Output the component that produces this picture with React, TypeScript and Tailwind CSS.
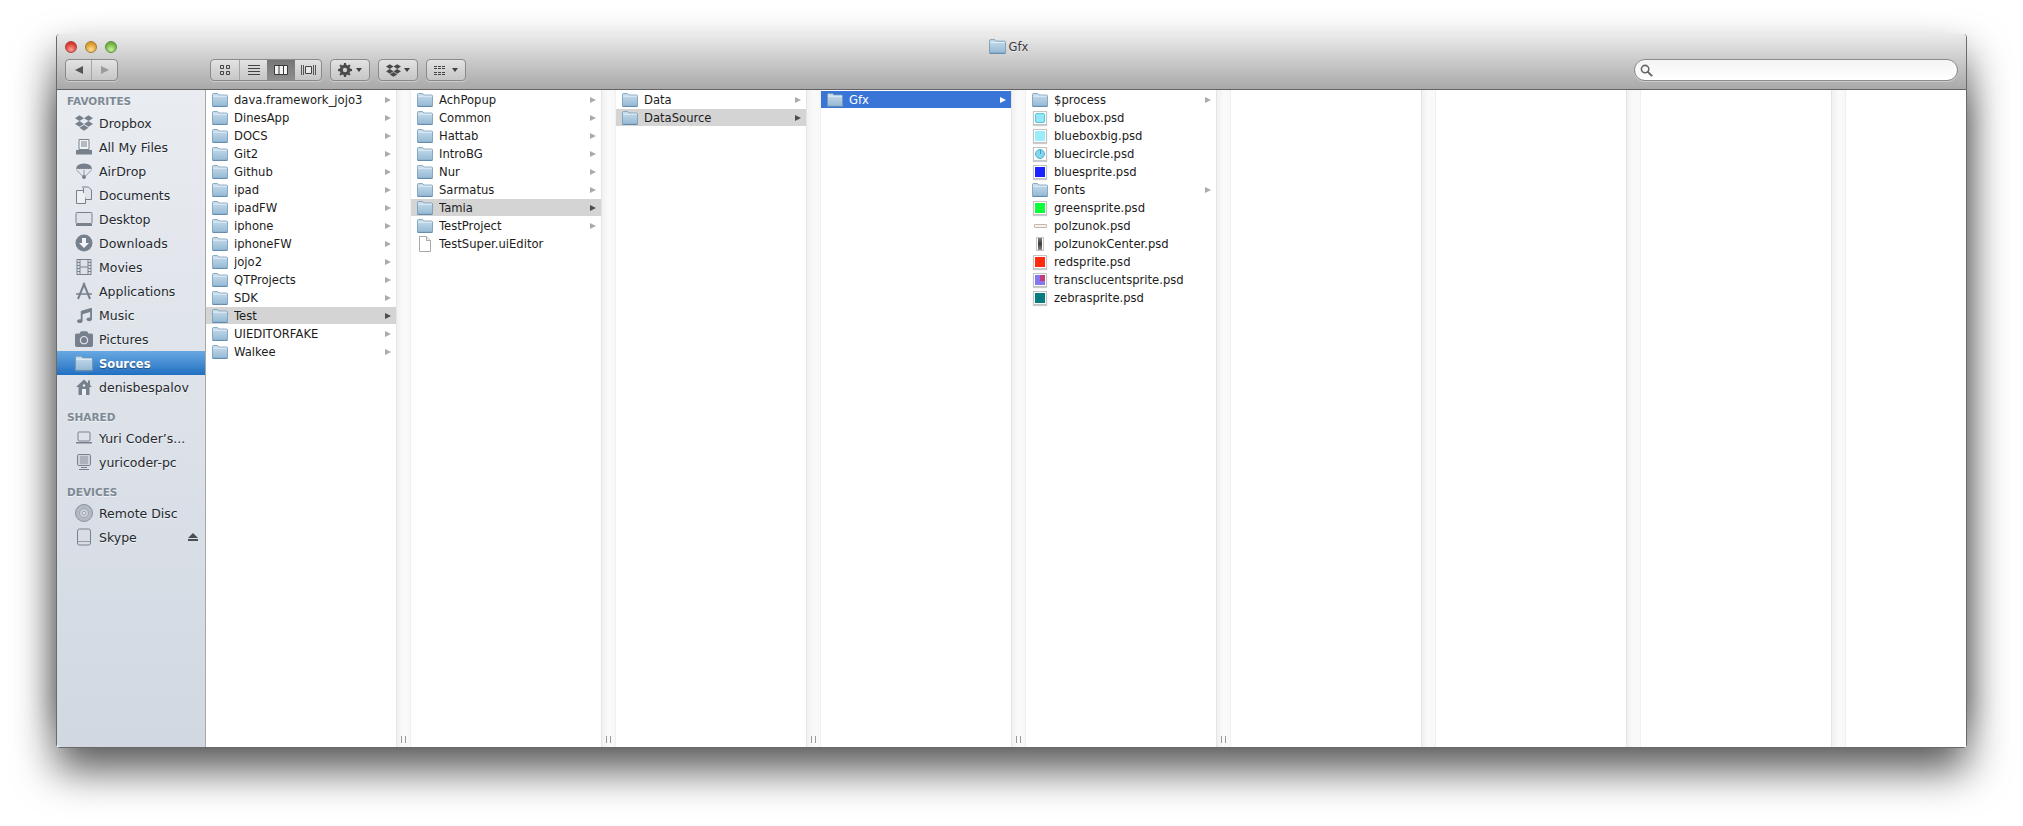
import React from 'react';
import { FaDropbox, FaMusic, FaCamera } from 'react-icons/fa';

type Thumb = 'blue' | 'bluebox' | 'bluebig' | 'circle' | 'green' | 'slider' | 'center' | 'red' | 'trans' | 'zebra';
type Item = { name: string; folder?: boolean; doc?: boolean; thumb?: Thumb; state?: 'gray' | 'blue' };

const FolderIcon = ({ className = 'w-[16px] h-[14px]' }: { className?: string }) => (
  <svg viewBox="0 0 16 14" className={className}>
    <defs>
      <linearGradient id="fold" x1="0" y1="0" x2="0" y2="1">
        <stop offset="0" stopColor="#c9deed" />
        <stop offset="1" stopColor="#93b8d3" />
      </linearGradient>
    </defs>
    <path d="M.5 13V1.5Q.5.5 1.5.5h4L7 2h7.5q1 0 1 1v10q0 .5-.5.5H1q-.5 0-.5-.5z" fill="url(#fold)" stroke="#7499b6" strokeWidth=".8" />
    <path d="M1 3.2h14" stroke="#e6f1f8" strokeWidth=".9" />
    <path d="M.8 13.4h14.4" stroke="#5f87a8" strokeWidth=".9" />
  </svg>
);

const DocIcon = () => (
  <svg viewBox="0 0 14 16" className="w-[14px] h-[16px]">
    <path d="M1.5.5h7l4 4v11h-11z" fill="#fff" stroke="#a9a9a9" />
    <path d="M8.5.5v4h4" fill="#ececec" stroke="#a9a9a9" />
  </svg>
);

const ThumbIcon = ({ kind }: { kind: Thumb }) => {
  if (kind === 'slider') {
    return <div className="w-[13px] h-[4px] bg-[#f6f3ef] border border-[#c4b8ac] rounded-[1px]" />;
  }
  if (kind === 'center') {
    return (
      <div className="w-[8px] h-[14px] bg-white border border-[#c4c4c4] flex items-center justify-center">
        <div className="w-[4px] h-[12px] bg-gradient-to-b from-[#7d7d7d] via-[#3d3d3d] to-[#8a8a8a]" />
      </div>
    );
  }
  return (
    <div className="w-[14px] h-[14px] bg-white border border-[#c4c4c4] shadow-[0_1px_1px_rgba(0,0,0,0.2)] flex items-center justify-center">
      {kind === 'blue' && <div className="w-[10px] h-[10px] bg-[#1a22ff]" />}
      {kind === 'green' && <div className="w-[10px] h-[10px] bg-[#0cff3a]" />}
      {kind === 'red' && <div className="w-[10px] h-[10px] bg-[#ff2a10]" />}
      {kind === 'zebra' && <div className="w-[10px] h-[10px] bg-[#087b80]" />}
      {kind === 'bluebox' && <div className="w-[10px] h-[10px] rounded-[2px] bg-[#93e9f8] border border-[#55c3d8]" />}
      {kind === 'bluebig' && <div className="w-[10px] h-[10px] bg-[#9aeefc]" />}
      {kind === 'circle' && (
        <div className="w-[10px] h-[10px] rounded-full bg-[#86d6ee] border border-[#4fb5d3] flex justify-center">
          <div className="w-px h-[4px] bg-[#3e9cc0]" />
        </div>
      )}
      {kind === 'trans' && (
        <div className="w-[10px] h-[10px] bg-[#8378ee] flex justify-end">
          <div className="w-[5px] h-[6px] bg-[#c53a78]" />
        </div>
      )}
    </div>
  );
};

const Arrow = ({ state }: { state?: Item['state'] }) => {
  const color = state === 'blue' ? 'border-l-white' : state === 'gray' ? 'border-l-[#4d4d4d]' : 'border-l-[#ababab]';
  return <div className={`w-0 h-0 border-y-[3.5px] border-y-transparent border-l-[6px] ${color}`} />;
};

const Row = ({ item }: { item: Item }) => {
  const bg = item.state === 'blue' ? 'bg-[#3875d7] text-white' : item.state === 'gray' ? 'bg-[#d4d4d4] text-[#1c1c1c]' : 'text-[#1c1c1c]';
  return (
    <div className={`h-[17px] mb-px flex items-center pl-[6px] pr-[5px] ${bg}`}>
      <div className="w-[16px] h-[16px] flex items-center justify-center shrink-0">
        {item.folder && <FolderIcon />}
        {item.doc && <DocIcon />}
        {item.thumb && <ThumbIcon kind={item.thumb} />}
      </div>
      <span className="ml-[6px] pt-[2px] flex-1 truncate">{item.name}</span>
      {item.folder && <Arrow state={item.state} />}
    </div>
  );
};

const Gutter = ({ grip }: { grip: boolean }) => (
  <div className="w-[15px] shrink-0 bg-gradient-to-r from-[#f1f1f1] via-[#fafafa] to-[#f8f8f8] border-l border-[#e4e4e4] border-r border-r-[#f0f0f0] flex items-end justify-center pb-[4px]">
    {grip && (
      <div className="flex gap-[3px]">
        <div className="w-px h-[7px] bg-[#9a9a9a]" />
        <div className="w-px h-[7px] bg-[#9a9a9a]" />
      </div>
    )}
  </div>
);

const f = (name: string, state?: Item['state']): Item => ({ name, folder: true, state });
const t = (name: string, thumb: Thumb): Item => ({ name, thumb });

const columns: Item[][] = [
  [
    f('dava.framework_jojo3'), f('DinesApp'), f('DOCS'), f('Git2'), f('Github'), f('ipad'), f('ipadFW'),
    f('iphone'), f('iphoneFW'), f('jojo2'), f('QTProjects'), f('SDK'), f('Test', 'gray'), f('UIEDITORFAKE'), f('Walkee'),
  ],
  [
    f('AchPopup'), f('Common'), f('Hattab'), f('IntroBG'), f('Nur'), f('Sarmatus'), f('Tamia', 'gray'), f('TestProject'),
    { name: 'TestSuper.uiEditor', doc: true },
  ],
  [f('Data'), f('DataSource', 'gray')],
  [f('Gfx', 'blue')],
  [
    f('$process'), t('bluebox.psd', 'bluebox'), t('blueboxbig.psd', 'bluebig'), t('bluecircle.psd', 'circle'),
    t('bluesprite.psd', 'blue'), f('Fonts'), t('greensprite.psd', 'green'), t('polzunok.psd', 'slider'),
    t('polzunokCenter.psd', 'center'), t('redsprite.psd', 'red'), t('transclucentsprite.psd', 'trans'), t('zebrasprite.psd', 'zebra'),
  ],
  [], [], [],
];

const side = 'w-[18px] h-[18px] text-[#77818e]';

const sideIcons: Record<string, React.ReactNode> = {
  Dropbox: <FaDropbox className={side} />,
  'All My Files': (
    <svg viewBox="0 0 18 18" className={side}>
      <path d="M4 1.5h10v10H4z" fill="#f1f3f6" stroke="currentColor" />
      <path d="M6 4h6M6 6h6M6 8h6" stroke="currentColor" />
      <path d="M1 12h16v4.5H1z" fill="currentColor" />
    </svg>
  ),
  AirDrop: (
    <svg viewBox="0 0 18 18" className={side}>
      <path d="M1 7.5Q1 1.5 9 1.5t8 6q-1.5-1.2-3-.2-1.5-1-2.5 0-1.2-1-2.5 0-1.3-1-2.5 0-1-1-2.5 0-1.5-1-3 .2z" fill="currentColor" />
      <path d="M1.5 8l6 6M16.5 8l-6 6M9 8v6" stroke="currentColor" strokeWidth=".8" />
      <circle cx="9" cy="15" r="2" fill="currentColor" />
    </svg>
  ),
  Documents: (
    <svg viewBox="0 0 18 18" className={side}>
      <path d="M1.5 4.5h9v13h-9z" fill="#eef0f4" stroke="currentColor" />
      <path d="M7 1h6.5l3 3v9.5H11" fill="#e2e5ea" stroke="currentColor" />
      <path d="M8 7V2h1v5z" fill="currentColor" />
    </svg>
  ),
  Desktop: (
    <svg viewBox="0 0 18 18" className={side}>
      <rect x="1" y="2.5" width="16" height="11" rx="1" fill="#dfe3e9" stroke="currentColor" />
      <path d="M1 14h16v2H1z" fill="currentColor" />
    </svg>
  ),
  Downloads: (
    <svg viewBox="0 0 18 18" className={side}>
      <circle cx="9" cy="9" r="8.5" fill="currentColor" />
      <path d="M7 4h4v5h3l-5 5-5-5h3z" fill="#f2f4f7" />
    </svg>
  ),
  Movies: (
    <svg viewBox="0 0 18 18" className={side}>
      <rect x="2" y="1.5" width="14" height="15" fill="#dfe3e9" stroke="currentColor" />
      <path d="M5 1.5v15M13 1.5v15M5 9h8" stroke="currentColor" />
      <path d="M2 4.5h3M2 7.5h3M2 10.5h3M2 13.5h3M13 4.5h3M13 7.5h3M13 10.5h3M13 13.5h3" stroke="currentColor" />
    </svg>
  ),
  Applications: (
    <svg viewBox="0 0 18 18" className={side}>
      <path d="M9.5 1L3 17M8.5 1L15 17" stroke="currentColor" strokeWidth="2" fill="none" />
      <path d="M1 12h16" stroke="currentColor" strokeWidth="1.5" />
    </svg>
  ),
  Music: <FaMusic className="w-[15px] h-[15px] text-[#77818e]" />,
  Pictures: <FaCamera className={side} />,
  Sources: <FolderIcon className="w-[18px] h-[17px]" />,
  denisbespalov: (
    <svg viewBox="0 0 18 18" className={side}>
      <path d="M1 9l8-7.5 4 3.7V2.5h2v4.6L17 9h-2.5v8h-11V9z" fill="currentColor" />
      <path d="M7 17v-6h4v6z" fill="#eef0f4" />
      <circle cx="9" cy="7.5" r="1.2" fill="#eef0f4" />
    </svg>
  ),
  "Yuri Coder’s...": (
    <svg viewBox="0 0 18 18" className={side}>
      <rect x="3" y="3" width="12" height="9" rx="1" fill="#dfe3e9" stroke="currentColor" />
      <path d="M1 13h16v1.5H1z" fill="currentColor" />
    </svg>
  ),
  'yuricoder-pc': (
    <svg viewBox="0 0 18 18" className={side}>
      <rect x="2.5" y="1.5" width="13" height="11" rx="1" fill="#cdd2da" stroke="currentColor" />
      <path d="M5 4h8M5 6h8M5 8h8M5 10h8" stroke="currentColor" strokeWidth=".8" />
      <path d="M6 14h6v1H6zM4 16h10v1H4z" fill="currentColor" />
    </svg>
  ),
  'Remote Disc': (
    <svg viewBox="0 0 18 18" className={side}>
      <circle cx="9" cy="9" r="8.5" fill="#b4bac4" stroke="currentColor" strokeWidth=".8" />
      <circle cx="9" cy="9" r="4.5" fill="#c9ced6" stroke="#8e96a2" strokeWidth=".6" />
      <circle cx="9" cy="9" r="1.6" fill="#eef0f4" stroke="currentColor" strokeWidth=".6" />
    </svg>
  ),
  Skype: (
    <svg viewBox="0 0 18 18" className={side}>
      <rect x="2.5" y="1" width="13" height="16" rx="2" fill="#d9dde3" stroke="currentColor" />
      <path d="M3 13.5h12" stroke="currentColor" strokeWidth=".7" />
    </svg>
  ),
};

const SideRow = ({ name, active, eject }: { name: string; active?: boolean; eject?: boolean }) => (
  <div
    className={`h-[24px] flex items-center pl-[18px] pr-[7px] ${
      active
        ? 'bg-gradient-to-b from-[#69a9e2] to-[#1f70c2] text-white text-[11.5px] font-bold [text-shadow:0_1px_1px_rgba(0,0,0,0.4)]'
        : 'text-[#25292e] [text-shadow:0_1px_0_rgba(255,255,255,0.6)]'
    }`}
  >
    <div className="w-[18px] h-[18px] flex items-center justify-center shrink-0">{sideIcons[name]}</div>
    <span className={`ml-[6px] flex-1 truncate ${active ? 'pt-[3px]' : 'pt-[2px]'}`}>{name}</span>
    {eject && (
      <div className="flex flex-col items-center gap-px">
        <div className="w-0 h-0 border-x-[5px] border-x-transparent border-b-[5px] border-b-[#4a4f56]" />
        <div className="w-[10px] h-[2px] bg-[#4a4f56]" />
      </div>
    )}
  </div>
);

const SideHeader = ({ label, h, pb }: { label: string; h: string; pb: string }) => (
  <div className={`${h} ${pb} flex items-end pl-[10px] text-[10.5px] font-bold text-[#7d8995] [text-shadow:0_1px_0_rgba(255,255,255,0.6)]`}>{label}</div>
);

const btn = 'h-[22px] rounded-[4px] border border-[#8a8a8a] bg-gradient-to-b from-[#e3e3e3] to-[#c6c6c6] shadow-[0_1px_0_rgba(255,255,255,0.35)] flex items-center justify-center';
const seg = 'h-full flex items-center justify-center';

const Caret = () => <div className="w-0 h-0 border-x-[3.5px] border-x-transparent border-t-[4px] border-t-[#3f3f3f]" />;

const Gear = () => (
  <svg viewBox="0 0 14 14" className="w-[14px] h-[14px] text-[#4a4a4a]">
    <path d="M6 0h2l.4 2 1.3.5L11.4 1.4l1.2 1.2L11.5 4.3l.5 1.3 2 .4v2l-2 .4-.5 1.3 1.1 1.7-1.2 1.2-1.7-1.1-1.3.5L8 14H6l-.4-2-1.3-.5-1.7 1.1-1.2-1.2 1.1-1.7L2 8.4 0 8V6l2-.4.5-1.3L1.4 2.6l1.2-1.2 1.7 1.1L5.6 2z" fill="currentColor" />
    <circle cx="7" cy="7" r="2.2" fill="#cfcfcf" />
  </svg>
);

const Toolbar = () => (
  <div className="h-[56px] shrink-0 flex flex-col pl-[8px] pr-[7px] bg-gradient-to-b from-[#ebebeb] to-[#a9a9a9] border-b border-[#636363] rounded-t-[4px]">
    <div className="h-[25px] grid grid-cols-[1fr_auto_1fr] items-center">
      <div className="flex gap-[8px]">
        <div className="w-[12px] h-[12px] rounded-full bg-[radial-gradient(circle_at_50%_75%,#ff9d92,#d8352d_70%)] border border-[#a8433d]" />
        <div className="w-[12px] h-[12px] rounded-full bg-[radial-gradient(circle_at_50%_75%,#ffe08f,#d9952a_70%)] border border-[#a87c3a]" />
        <div className="w-[12px] h-[12px] rounded-full bg-[radial-gradient(circle_at_50%_75%,#c8f2a0,#6cae3a_70%)] border border-[#5f8f45]" />
      </div>
      <div className="flex items-center gap-[3px] mr-[7px] text-[11.5px] text-[#3a3a3a] [text-shadow:0_1px_0_rgba(255,255,255,0.5)]">
        <FolderIcon className="w-[17px] h-[15px]" />
        <span className="pt-[2px]">Gfx</span>
      </div>
      <div />
    </div>
    <div className="h-[22px] flex items-center">
      <div className={`${btn} w-[53px]`}>
        <div className={`${seg} flex-1 border-r border-[#a5a5a5]`}>
          <div className="w-0 h-0 border-y-[4.5px] border-y-transparent border-r-[8px] border-r-[#555]" />
        </div>
        <div className={`${seg} flex-1`}>
          <div className="w-0 h-0 border-y-[4.5px] border-y-transparent border-l-[8px] border-l-[#9b9b9b]" />
        </div>
      </div>
      <div className={`${btn} w-[112px] ml-[92px] overflow-hidden`}>
        <div className={`${seg} w-[29px] border-r border-[#a5a5a5]`}>
          <svg viewBox="0 0 10 10" className="w-[10px] h-[10px]">
            <path d="M.5.5h3v3h-3zM6.5.5h3v3h-3zM.5 6.5h3v3h-3zM6.5 6.5h3v3h-3z" fill="none" stroke="#444" />
          </svg>
        </div>
        <div className={`${seg} w-[27px]`}>
          <svg viewBox="0 0 12 10" className="w-[12px] h-[10px]">
            <path d="M0 .5h12M0 3.5h12M0 6.5h12M0 9.5h12" stroke="#444" />
          </svg>
        </div>
        <div className={`${seg} w-[28px] bg-gradient-to-b from-[#767676] to-[#8e8e8e]`}>
          <svg viewBox="0 0 14 10" className="w-[14px] h-[10px]">
            <path d="M.5.5h13v9H.5z" fill="#f3f3f3" stroke="#3a3a3a" />
            <path d="M5 .5v9M9.5.5v9" stroke="#3a3a3a" />
          </svg>
        </div>
        <div className={`${seg} flex-1`}>
          <svg viewBox="0 0 15 10" className="w-[15px] h-[10px]">
            <path d="M.5 0v10M2.5 0v10M12.5 0v10M14.5 0v10" stroke="#555" />
            <path d="M4.5 1.5h6v7h-6z" fill="#e8e8e8" stroke="#444" />
          </svg>
        </div>
      </div>
      <div className={`${btn} w-[40px] ml-[8px] gap-[4px]`}>
        <Gear />
        <Caret />
      </div>
      <div className={`${btn} w-[40px] ml-[8px] gap-[3px]`}>
        <FaDropbox className="w-[15px] h-[15px] text-[#4a4a4a]" />
        <Caret />
      </div>
      <div className={`${btn} w-[40px] ml-[8px] gap-[7px]`}>
        <svg viewBox="0 0 11 9" className="w-[11px] h-[9px]">
          <path d="M0 .5h3M4 .5h3M8 .5h3M0 2.5h3M4 2.5h3M8 2.5h3M0 6.5h3M4 6.5h3M8 6.5h3M0 8.5h3M4 8.5h3M8 8.5h3" stroke="#444" />
        </svg>
        <Caret />
      </div>
      <div className="ml-auto mr-[1px] w-[324px] h-[22px] rounded-full bg-gradient-to-b from-[#f4f4f4] to-white border border-[#8b8b8b] shadow-[0_1px_0_rgba(255,255,255,0.35)] flex items-center pl-[5px]">
        <svg viewBox="0 0 14 14" className="w-[13px] h-[13px]">
          <circle cx="5.5" cy="5.5" r="4" fill="none" stroke="#666" strokeWidth="1.7" />
          <path d="M8.5 8.5l4 4" stroke="#666" strokeWidth="2.2" strokeLinecap="round" />
        </svg>
      </div>
    </div>
  </div>
);

export default function App() {
  return (
    <div className="isolate w-[2023px] h-[826px] bg-white pt-[34px] pl-[56px] overflow-hidden font-['DejaVu_Sans',sans-serif] text-[11.6px]">
      <div className="relative w-[1911px] h-[714px] flex flex-col rounded-[4px] border-x border-b border-[#6a6a6a] shadow-[0_22px_42px_rgba(0,0,0,0.66)]">
        {/* extra darkness along the window's sides, the single shadow can't do it */}
        <div className="absolute -z-10 left-0 right-0 top-[70px] bottom-[30px] shadow-[0_0_28px_4px_rgba(0,0,0,0.3)]" />
        <Toolbar />
        <div className="flex-1 min-h-0 flex bg-white">
          <div className="w-[149px] shrink-0 bg-gradient-to-b from-[#e9ecf1] to-[#d1d8e1] border-r border-[#a8a8a8] rounded-bl-[4px] text-[12.5px]">
            <SideHeader label="FAVORITES" h="h-[21px]" pb="pb-[1px]" />
            {['Dropbox', 'All My Files', 'AirDrop', 'Documents', 'Desktop', 'Downloads', 'Movies', 'Applications', 'Music', 'Pictures'].map(n => (
              <SideRow key={n} name={n} />
            ))}
            <SideRow name="Sources" active />
            <SideRow name="denisbespalov" />
            <SideHeader label="SHARED" h="h-[27px]" pb="pb-0" />
            <SideRow name="Yuri Coder’s..." />
            <SideRow name="yuricoder-pc" />
            <SideHeader label="DEVICES" h="h-[27px]" pb="pb-0" />
            <SideRow name="Remote Disc" />
            <SideRow name="Skype" eject />
          </div>
          {columns.map((col, i) => (
            <div key={i} className="flex min-w-0 w-[205px]">
              <div className="w-[190px] shrink-0 pt-px">
                {col.map(item => (
                  <Row key={item.name} item={item} />
                ))}
              </div>
              <Gutter grip={i < 5} />
            </div>
          ))}
          <div className="flex-1" />
        </div>
      </div>
    </div>
  );
}
